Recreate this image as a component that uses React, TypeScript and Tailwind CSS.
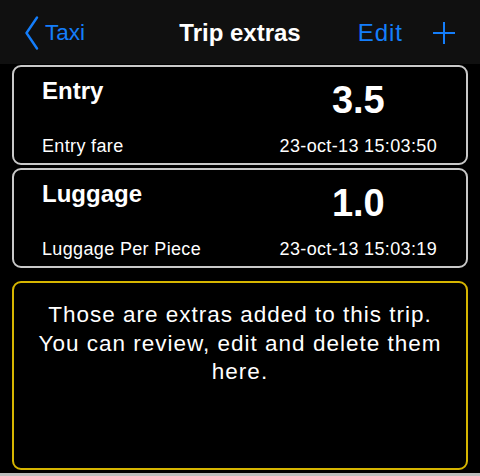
import React from "react";

function Card({ title, value, sub, date }: { title: string; value: string; sub: string; date: string }) {
  return (
    <div className="h-[100px] rounded-[9px] border-2 border-[#c9c9c9] bg-black flex justify-between pl-[28px] pr-[29px] pt-[12px] pb-[8px]">
      <div className="flex flex-col justify-between">
        <div className="text-[24px] leading-[24px] font-bold text-white">{title}</div>
        <div className="text-[18px] leading-[17px] tracking-[0.35px] text-white">{sub}</div>
      </div>
      <div className="flex flex-col justify-between items-center">
        <div className="mt-[2px] text-[38px] leading-[38px] font-bold text-white">{value}</div>
        <div className="text-[18px] leading-[17px] tracking-[0.35px] text-white">{date}</div>
      </div>
    </div>
  );
}

export default function App() {
  return (
    <div className="w-[480px] h-[476px] bg-black flex flex-col overflow-hidden font-['Liberation_Sans',Arial,sans-serif]">
      <div className="h-[64px] shrink-0 bg-[#101010] grid grid-cols-[1fr_auto_1fr] items-center pt-[2px]">
        <div className="flex items-center pl-[24px] text-[#147efb]">
          <svg width="15" height="34" viewBox="0 0 15 34" fill="none">
            <polyline points="13,1.5 2.5,17 13,32.5" stroke="#147efb" strokeWidth="2.4" strokeLinecap="round" strokeLinejoin="round" />
          </svg>
          <span className="ml-[6px] text-[22.5px] leading-[24px]">Taxi</span>
        </div>
        <div className="text-[24px] leading-[24px] font-bold text-white">Trip extras</div>
        <div className="flex items-center justify-end pr-[24px] gap-[29px] text-[#147efb]">
          <span className="text-[24px] leading-[24px] tracking-[1px]">Edit</span>
          <svg width="24" height="24" viewBox="0 0 24 24" fill="none">
            <line x1="12" y1="1" x2="12" y2="23" stroke="#147efb" strokeWidth="2" />
            <line x1="1" y1="12" x2="23" y2="12" stroke="#147efb" strokeWidth="2" />
          </svg>
        </div>
      </div>
      <div className="px-[12px] flex flex-col">
        <div className="mt-[1px]">
          <Card title="Entry" value="3.5" sub="Entry fare" date="23-oct-13 15:03:50" />
        </div>
        <div className="mt-[3px]">
          <Card title="Luggage" value="1.0" sub="Luggage Per Piece" date="23-oct-13 15:03:19" />
        </div>
        <div className="mt-[13px] h-[189px] rounded-[9px] border-2 border-[#d6b500] bg-black pt-[18px] px-[6px] text-center text-white text-[22.5px] leading-[28.5px] tracking-[1px]">
          Those are extras added to this trip.
          <br />
          You can review, edit and delete them
          <br />
          here.
        </div>
      </div>
      <div className="mt-auto h-[3px] bg-[#bdbdbd]" />
    </div>
  );
}
